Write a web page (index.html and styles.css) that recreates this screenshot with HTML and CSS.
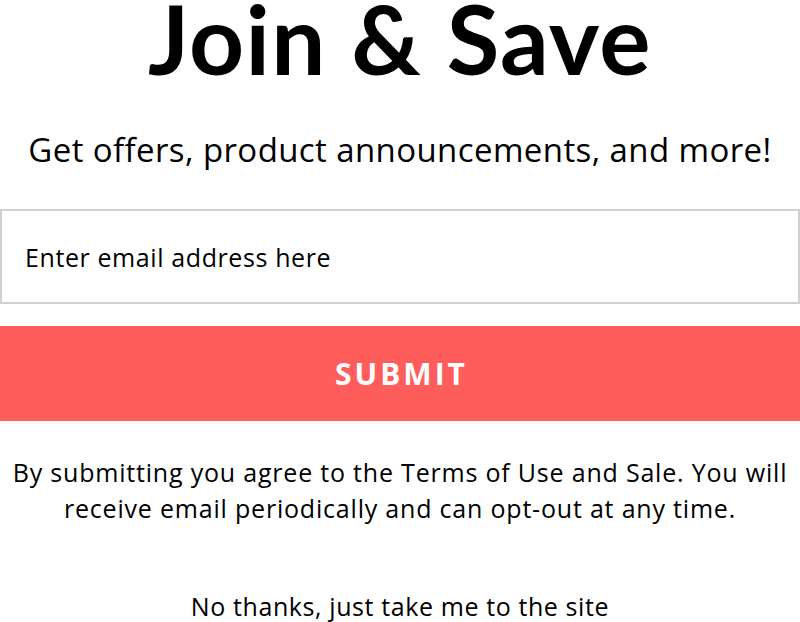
FILE: index.html
```html
<!DOCTYPE html>
<html>
<head>
<meta charset="utf-8">
<link rel="stylesheet" href="styles.css">
</head>
<body>
<main class="signup">
  <h1 class="title">Join &amp; Save</h1>
  <p class="subtitle">Get offers, product announcements, and more!</p>
  <form class="form">
    <input class="email" type="email" placeholder="Enter email address here">
    <button class="submit" type="button">SUBMIT</button>
  </form>
  <p class="legal">By submitting you agree to the Terms of Use and Sale. You will receive email periodically and can opt-out at any time.</p>
  <a class="skip" href="#">No thanks, just take me to the site</a>
</main>
</body>
</html>
```
FILE: styles.css
```css
html, body {
  margin: 0;
  padding: 0;
  background: #fff;
}
body {
  font-family: "Open Sans", "Lato", sans-serif;
  color: #000;
  overflow: hidden;
}
.signup {
  display: flex;
  flex-direction: column;
  align-items: stretch;
  text-align: center;
}
.title {
  margin: -22px 0 0;
  font-family: "Lato", "Open Sans", sans-serif;
  font-size: 96px;
  font-weight: 700;
  line-height: 120px;
  letter-spacing: 1.3px;
}
.subtitle {
  margin: 30px 0 0;
  font-size: 33px;
  line-height: 44px;
  letter-spacing: 0.4px;
}
.form {
  display: flex;
  flex-direction: column;
  gap: 22px;
  margin-top: 37px;
}
.email {
  box-sizing: border-box;
  width: 100%;
  height: 95px;
  margin: 0;
  padding: 0 23px;
  border: 2px solid #cfcfcf;
  font-family: inherit;
  font-size: 25px;
  letter-spacing: 0.6px;
  color: #000;
  outline: none;
}
.email::placeholder {
  color: #000;
  opacity: 1;
}
.submit {
  height: 95px;
  margin: 0;
  padding: 0 0 0 3px;
  border: 0;
  background: #ff5c5c;
  color: #fff;
  font-family: inherit;
  font-size: 30px;
  font-weight: 700;
  letter-spacing: 3px;
}
.legal {
  margin: 33px 0 0;
  padding: 0 6px;
  font-size: 25px;
  line-height: 36px;
  letter-spacing: 0.8px;
}
.skip {
  margin-top: 62px;
  font-size: 25px;
  line-height: 36px;
  letter-spacing: 0.6px;
  color: #000;
  text-decoration: none;
}
```
